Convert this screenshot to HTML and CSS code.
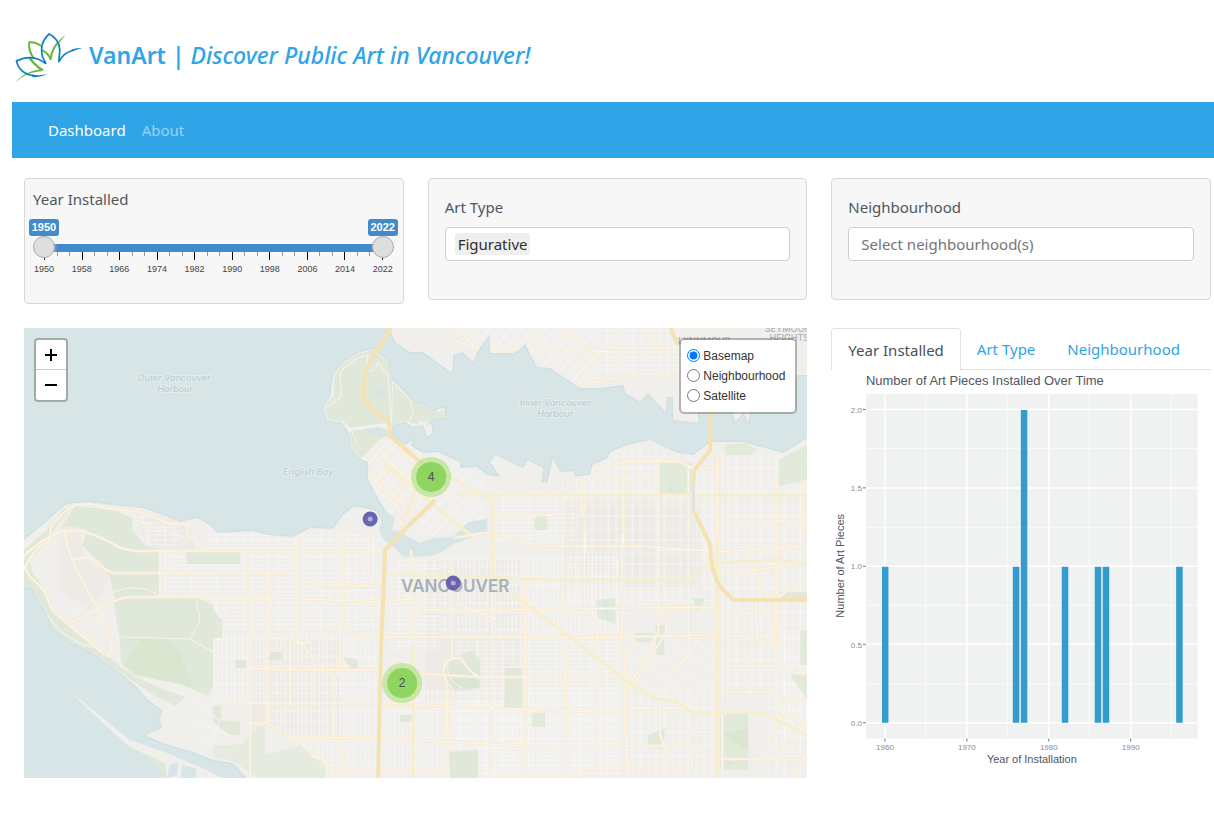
FILE: index.html
```html
<!DOCTYPE html>
<html lang="en">
<head>
<meta charset="utf-8">
<meta name="viewport" content="width=device-width, initial-scale=1">
<title>VanArt</title>
<link rel="stylesheet" href="styles.css">
</head>
<body>
<header class="masthead">
  <svg class="logo" viewBox="35 15 212 174" aria-hidden="true">
    <g fill="none" stroke-linejoin="round">
      <path stroke="#6fb43f" stroke-width="6" d="M98 111Q82 89 85 65Q105 64 119 76M122 88Q140 96 147 114Q151 86 168 66"/>
      <path fill="#6fb43f" d="M166 68Q175 56 191 42Q181 56 170 70zM46 181Q62 161 88 151Q98 146 114 144Q96 130 82 112L90 109Q104 131 128 144Q122 150 108 151Q72 156 46 181z"/>
      <path stroke="#0e82c8" stroke-width="5" d="M134 128Q97 96 48 119Q56 156 100 163M134 128Q128 116 124 108Q113 67 143 41Q172 55 174 88L171 121Q185 96 210 89"/>
      <path fill="#0e82c8" d="M92 158Q116 164 139 156Q118 168 94 166zM208 86Q222 82 240 82Q225 85 210 92z"/>
    </g>
  </svg>
  <h1 class="title">VanArt | <em>Discover Public Art in Vancouver!</em></h1>
</header>

<nav class="navbar">
  <a class="nav-link active" href="#dashboard">Dashboard</a>
  <a class="nav-link" href="#about">About</a>
</nav>

<main class="board">
  <section class="card card-years">
    <h2 class="label" id="years">Year Installed</h2>
    <div class="slider" role="group" aria-labelledby="years">
      <div class="bubbles"><output class="bubble">1950</output><output class="bubble">2022</output></div>
      <div class="track">
        <input class="range" type="range" min="1950" max="2022" value="1950" aria-label="From year">
        <input class="range" type="range" min="1950" max="2022" value="2022" aria-label="To year">
      </div>
      <div class="ticks"><i></i><i></i><i></i><i></i><i></i><i></i><i></i><i></i><i></i><i></i><i></i><i></i><i></i><i></i><i></i><i></i><i></i><i></i><i></i><i></i><i></i><i></i><i></i><i></i><i></i><i></i><i></i><i></i></div>
      <div class="years"><span>1950</span><span>1958</span><span>1966</span><span>1974</span><span>1982</span><span>1990</span><span>1998</span><span>2006</span><span>2014</span><span>2022</span></div>
    </div>
  </section>

  <section class="card">
    <label class="label" for="art-type">Art Type</label>
    <div class="field"><span class="chip">Figurative</span><input class="entry" id="art-type" type="text"></div>
  </section>

  <section class="card">
    <label class="label" for="hood">Neighbourhood</label>
    <div class="field field-empty"><input class="entry" id="hood" type="text" placeholder="Select neighbourhood(s)"></div>
  </section>

  <section class="map">
    <svg class="map-canvas" viewBox="24 328 783 450" preserveAspectRatio="xMidYMid slice" role="img" aria-label="Map of public art in Vancouver">
      <defs>
        <pattern id="blocks" width="26" height="17" patternUnits="userSpaceOnUse">
          <path class="street" d="M0 0H26M0 4H26M0 8H26M0 13H26M0 0V17M9 0V17M18 0V17"/>
        </pattern>
        <pattern id="lanes" width="21" height="27" patternUnits="userSpaceOnUse">
          <path class="street" d="M0 0V27M4 0V27M8 0V27M12 0V27M17 0V27M0 0H21M0 9H21M0 18H21"/>
        </pattern>
        <pattern id="wide" width="24" height="24" patternUnits="userSpaceOnUse">
          <path class="street" d="M0 0H24M0 12H24M0 0V24M8 0V24M16 0V24"/>
        </pattern>
        <pattern id="diag" width="16" height="8" patternUnits="userSpaceOnUse" patternTransform="rotate(42)">
          <path class="street" d="M0 0H16M0 0V8M8 0V8"/>
        </pattern>
        <pattern id="fan" width="16" height="7" patternUnits="userSpaceOnUse" patternTransform="rotate(-58)">
          <path class="street" d="M0 0H16M0 0V7"/>
        </pattern>
        <path id="land-main" d="M24 540L40 527 50 518 67 504 87 502 113 505 143 508 163 515 180 522 197 518 210 525 217 533 233 532 253 531 267 535 293 537 310 528 333 529 343 515 353 507 364 508 375 511 387 512 380 502 368 480 368 462 358 458 350 445 350 435 342 423 327 420 323 407 330 397 333 375 342 363 357 353 373 349 387 360 392 380 403 390 413 402 423 405 435 413 437 409 445 408 445 418 435 418 427 423 432 425 432 433 427 437 423 425 413 427 405 422 392 425 392 435 403 447 412 440 411 446 423 453 438 452 448 457 460 462 460 468 477 467 487 475 500 477 490 462 495 455 523 468 527 460 543 468 541 482 547 483 553 458 560 472 573 471 575 477 590 475 592 465 607 458 610 452 627 445 650 440 677 453 693 455 710 442 743 442 783 453 807 438V778H247L233 763 213 760 193 752 163 743 145 735 162 728 160 720 162 710 148 700 137 687 120 673 93 653 67 640 52 628 47 613 37 600 32 588 24 587Z"/>
        <path id="land-north" d="M389 328L395 342 410 352 423 352 452 373 453 355 463 352 473 362 478 350 489 335 490 353 513 353 519 350 525 344 532 358 537 367 550 368 562 376 580 388 600 388 623 385 625 393 640 402 648 393 665 412 667 397 673 397 673 420 698 423 697 405 730 408 735 422 743 413 748 422 752 405 790 395 797 375 807 375V328Z"/>
        <clipPath id="ashore"><use href="#land-main"/><use href="#land-north"/></clipPath>
        <g id="roads">
          <path d="M24 570Q35 545 49 542L51 528Q58 515 75 505Q92 502 104 508L140 512 170 524 187 524V535L197 541V549M24 556Q40 540 62 531H82Q105 538 120 548L135 551H383M64 531Q68 555 82 580L98 609 109 632 112 647 107 657M72 560Q85 555 98 562Q106 572 114 573H295L302 580 321 585 383 586M68 624L105 606Q120 597 130 597H245L383 602 415 598 425 610H493L717 607M24 565L30 577 43 589 52 610 68 624 105 655M160 550V596M245 550V583L250 590V778M267 572V723M297 534V640M341 534V575M341 575V623L339 670 334 679 334 737 352 778M368 534V575M247 634H285L298 643Q306 645 315 638L335 628 348 628 356 637H555L575 638 717 635M297 640L311 654 314 664V703M290 638V703M247 669L383 670 442 675 480 677H628M213 703H383L487 708 595 712H678L690 700M250 710V723H267L290 738 302 744 314 757 325 761 328 778M290 737L383 738 540 747 605 746H695L713 759H807M325 772H447M490 776H580L592 768H692V748M411 550V640M452 555V658M452 658Q438 667 447 682L448 778M452 658H461Q471 675 480 677M492 550V778M525 580V703L522 778M562 535V598L566 604V642L564 778M584 534V605L597 630 596 778M622 534V623L621 640 615 654M625 650V725L628 778M658 455V605L666 620V632L630 690M658 520V632L627 690M688 465V655L665 680M717 455V778M660 690V735L666 750V778M658 550H717M460 605L497 620M575 476H590L623 461H658L680 462 692 468M688 468H718M623 461V545M597 479H658M562 480V534M581 480V510L585 520V553M497 515H556M454 538L490 532 540 546H640L717 552 807 546"/>
          <path d="M722 455V778M777 478V618L779 720M803 480V535M722 521H807M725 575L800 563M722 613H780M722 639H757L773 644 775 600 805 578M745 550L763 590 775 597M757 639L755 600M722 666H780L795 673H807M722 692H775M750 612V710M777 700H807M777 710L807 725M762 755L785 710M770 761L800 725M795 778L807 750M690 735H717"/>
          <path d="M457 328L479 352 500 362 557 403 590 383 640 374 665 375 682 382M452 340L490 352H682M620 328V376M560 328L592 350 620 352M645 328L660 350M600 350L575 390M532 328V352"/>
          <path d="M375 463L394 446M372 470L415 518M381 455L432 500M400 450L450 497M372 485L395 463M390 500L422 462M407 512L445 468M375 480L405 519"/>
        </g>
      </defs>
      <rect class="water" x="24" y="328" width="783" height="450"/>
      <g class="shore"><use href="#land-main"/><use href="#land-north"/></g>
      <g class="land">
        <use href="#land-main"/><use href="#land-north"/>
        <path d="M70 691L93 710 130 740 167 753 207 770 222 778H162L160 767 143 753 130 747 107 727 87 708Z"/>
      </g>
      <g fill="#ece7e2">
        <path d="M137 520L160 515 190 527 195 549H148zM60 510L78 520 85 560 112 575 90 610 60 590zM250 640H340V735H290L250 720z" opacity=".55"/>
        <path d="M425 560H520V700H425zM560 500H700V590H560z" opacity=".4"/>
      </g>
      <g clip-path="url(#ashore)">
        <path fill="url(#blocks)" d="M232 533H293L333 531 380 537V632H213V600H160V550H205L210 533zM455 640H620V775H455zM495 490H575V540H495zM390 560H440V650H390z"/>
        <path fill="url(#lanes)" d="M213 632H380V702H213zM267 702H383V775H330L267 723zM385 690H615V775H385zM440 555H620V638H440zM780 630H807V740H780z"/>
        <path fill="url(#wide)" d="M575 480L627 447 665 452 690 470H715V605H565zM725 445L780 455 807 470V775H765V690H725zM630 690H715V775H630z"/>
        <path fill="url(#diag)" d="M352 458L390 437 411 448 455 462 485 478V520L430 537 390 520 370 480zM455 328L560 403 600 380V328z"/>
        <path fill="url(#fan)" d="M623 635H715V710L690 712 640 688 625 670z"/>
        <path fill="url(#blocks)" d="M600 328H680V374H600zM140 520L180 526V546H148z"/>
      </g>
      <g class="park">
        <path d="M75 506L113 510 133 518 132 530 145 545 160 550V600L115 598 109 575 97 560 82 545 88 530 75 527 62 527z"/>
        <path d="M113 600Q120 597 140 597H195L213 605V685L208 696 180 684 133 675 121 663 120 640z"/>
        <path d="M24 550L48 529 62 510 75 505 60 520 47 542 30 560 32 572 44 588 53 611 69 625 110 658 133 676 165 690 185 697 176 706 155 696 128 678 95 654 67 640 52 628 47 613 37 600 32 588 24 587z"/>
        <path d="M342 364L357 354 373 350 388 362 392 382 391 422 350 428 342 422 327 419 324 407 334 395 334 376z"/>
        <path d="M393 381L409 397 418 402V424L405 421 392 425zM412 401L423 406 434 413 445 410V417L424 422 410 416z"/>
        <path d="M350 431L370 429 385 436 377 442 360 460 351 445zM186 550H240V564H187zM205 602V638H222V620zM659 463H692V495H659zM779 460L807 445V480L779 486zM447 660L472 650 480 660V688L455 691 443 675zM505 668H522V710H504zM532 713H545V727H532zM720 713H748V770H720zM448 752L478 750V778H448zM596 600L615 598V624L597 617zM725 445L745 443 757 450 750 455H725zM648 735L665 728 662 750 648 745zM655 625H664V655H656zM800 630H807V665H800zM780 592H807V600H780zM790 675H807V700zM634 633H655L650 642H635zM533 519L547 512V530H535zM343 657L357 660 358 668H350zM235 660H246V668H235zM271 652H282V660H268zM400 715H414V722H400zM213 706H221V720L240 722V735H230L213 722zM692 598H705L697 612z"/>
        <path d="M162 745L213 757V746L242 744 258 726H265V755L300 745 325 765V778H258L235 762z" opacity=".6"/>
        <path d="M143 753L165 763 167 778H162L158 768z"/>
      </g>
      <g class="deep">
        <path d="M123 665L140 640 165 636 180 652 192 687 140 675zM452 680L478 678V688H456zM748 728L748 750 722 735z"/>
      </g>
      <g class="path" clip-path="url(#ashore)">
        <path d="M328 420L323 410 336 401 341 396 340 372 357 358 368 355 366 366M342 421Q355 432 356 443M377 362L388 375 391 422M392 381L409 399M410 400L413 412 408 424M350 429L391 424M366 366Q372 378 378 362M120 637L190 639 200 620 196 600M190 639L213 652M45 610Q60 640 95 648M110 593Q140 582 158 595M135 520L190 540M142 515L150 549M80 575L92 600 73 615M96 628L105 612"/>
        <path d="M345 630Q360 600 383 613M345 645Q360 655 380 635M355 600L370 630M270 605L297 640M192 697Q210 715 220 720L208 745 190 720 230 735M448 663Q445 680 463 688M460 660L478 680"/>
      </g>
      <g class="water">
        <path d="M375 509L387 512 395 518 392 530 400 532 410 538 420 543 433 538 453 537 468 522 487 519 487 532 470 538 452 545 440 553 430 556 404 557 393 547 384 540 379 530 381 522z"/>
        <path d="M363 429L378 427 392 431 391 437 377 436zM376 391L382 388 387 393 384 398 377 396zM603 601L608 603V613L603 612zM170 765L178 762 177 775 167 778zM182 765L197 769 195 778H181zM726 761L734 763 730 766zM459 761H466V763H459zM669 486L673 482V492H669z"/>
      </g>
      <g clip-path="url(#ashore)">
        <use href="#roads" class="road-case"/>
        <use href="#roads" class="road-core"/>
      </g>
      <g class="artery">
        <path d="M487 495H807M384 574L490 577 550 580H690L705 566 717 563 780 560 807 565M493 500V577L500 586 530 607 590 653 625 680 652 697 675 702 695 714 745 712 765 714 807 735M717 540V778M413 645V778M440 472L492 500M385 705H413"/>
        <path d="M424 470L400 530M385 465L470 535M455 495H490"/>
      </g>
      <g class="highway">
        <path d="M391 328Q381 345 371 360Q357 388 368 404Q374 413 385 418Q392 424 388 434L420 462 440 487M435 500L411 523 385 550 383 600 381 640 378 778M710 412V450L694 470 693 484M694 512L710 545Q711 575 721 588L733 600H807M670 328L678 345"/>
      </g>
      <path d="M693 484V512" stroke="#e4e2dc" stroke-width="3"/>
      <g class="water-label">
        <text x="174" y="381">Outer Vancouver</text><text x="175" y="392">Harbour</text>
        <text x="555" y="406">Inner Vancouver</text><text x="555" y="417">Harbour</text>
        <text x="308" y="475">English Bay</text>
      </g>
      <g class="town-label">
        <text x="787" y="332">SEYMOUR</text><text x="789" y="341">HEIGHTS</text><text x="704" y="344">LYNNMOUR</text>
      </g>
      <text class="city-label" x="455" y="592">VANCOUVER</text>
      <g class="pin"><circle cx="370" cy="519" r="5"/><circle cx="453" cy="583" r="5"/></g>
      <g class="cluster">
        <circle class="halo" cx="431" cy="477" r="20"/><circle class="disc" cx="431" cy="477" r="15"/><text x="431" y="481">4</text>
        <circle class="halo" cx="402" cy="683" r="20"/><circle class="disc" cx="402" cy="683" r="15"/><text x="402" y="687">2</text>
      </g>
    </svg>
    <div class="zoom">
      <button type="button" aria-label="Zoom in"><svg viewBox="0 0 12 12"><path d="M0 6H12M6 0V12"/></svg></button>
      <button type="button" aria-label="Zoom out"><svg viewBox="0 0 12 12"><path d="M0 6H12"/></svg></button>
    </div>
    <fieldset class="layers">
      <label><input type="radio" name="layer" checked>Basemap</label>
      <label><input type="radio" name="layer">Neighbourhood</label>
      <label><input type="radio" name="layer">Satellite</label>
    </fieldset>
  </section>

  <section class="charts">
    <div class="tabs" role="tablist">
      <button class="tab selected" type="button" role="tab" aria-selected="true">Year Installed</button>
      <button class="tab" type="button" role="tab" aria-selected="false">Art Type</button>
      <button class="tab" type="button" role="tab" aria-selected="false">Neighbourhood</button>
    </div>
    <svg class="chart" viewBox="831 370 380 400" role="img" aria-label="Number of Art Pieces Installed Over Time">
      <text class="chart-title" x="866" y="385">Number of Art Pieces Installed Over Time</text>
      <rect x="866" y="394" width="332" height="345" fill="#f0f2f2"/>
      <path stroke="#fff" stroke-width="1" opacity=".7" d="M866 448.500H1198M866 527.500H1198M866 605.500H1198M866 684.500H1198M926 394V739M1007.500 394V739M1089.500 394V739M1171.500 394V739"/>
      <path stroke="#fff" stroke-width="1.500" d="M866 409.500H1198M866 488H1198M866 566.500H1198M866 644.500H1198M866 723H1198M885 394V739M967 394V739M1049 394V739M1131 394V739"/>
      <path stroke="#777" d="M863 409.500H866M863 488H866M863 566.500H866M863 644.500H866M863 723H866M885 739V742M967 739V742M1049 739V742M1131 739V742"/>
      <path fill="#349bce" d="M882 567h6.500v156h-6.500zM1013 567h6.500v156h-6.500zM1021 410h6.500v313h-6.500zM1062 567h6.500v156h-6.500zM1095 567h6.500v156h-6.500zM1103 567h6.500v156h-6.500zM1176.500 567h6.500v156h-6.500z"/>
      <g class="tick-y"><text x="862" y="413">2.0</text><text x="862" y="491">1.5</text><text x="862" y="569">1.0</text><text x="862" y="648">0.5</text><text x="862" y="726">0.0</text></g>
      <g class="tick-x"><text x="885" y="750">1960</text><text x="967" y="750">1970</text><text x="1049" y="750">1980</text><text x="1131" y="750">1990</text></g>
      <text class="axis" x="1032" y="763">Year of Installation</text>
      <text class="axis" transform="translate(844 566) rotate(-90)">Number of Art Pieces</text>
    </svg>
  </section>
</main>
</body>
</html>
```

FILE: styles.css
```css
* { box-sizing: border-box; }
body {
  margin: 0;
  padding-left: 12px;
  background: #fff;
  color: #4f565e;
  font: 15px/24px "Noto Sans", "Open Sans", sans-serif;
}

.masthead { display: flex; align-items: center; gap: 4px; height: 102px; padding: 16px 0 8px; }
.logo { width: 73px; height: 60px; flex: none; }
.title { margin: 0; color: #2fa4e7; font: 600 23px/32px "Noto Sans", "Open Sans", sans-serif; }
.title em { font-weight: 500; }

.navbar { display: flex; align-items: center; gap: 16px; height: 56px; padding: 0 36px; background: #2fa4e7; }
.nav-link { color: rgba(255, 255, 255, .5); text-decoration: none; }
.nav-link.active { color: #fff; }

.board {
  display: grid;
  grid-template-columns: repeat(3, minmax(0, 1fr));
  gap: 24px;
  align-items: start;
  padding: 20px 3px 24px 12px;
}

.card { min-height: 122px; padding: 16px; border: 1px solid #d8d8d8; border-radius: 4px; background: #f7f7f7; }
.label { display: block; margin: 0 0 8px; font-size: 15px; font-weight: 400; line-height: 24px; }
.field { display: flex; align-items: center; height: 34px; padding: 0 9px; border: 1px solid #ccc; border-radius: 4px; background: #fff; }
.field-empty { padding: 0 12px; }
.chip { padding: 0 3px; border-radius: 3px; background: #efefef; color: #303030; line-height: 22px; }
.entry { flex: 1; min-width: 0; padding: 0; border: 0; outline: 0; background: none; color: #303030; font: inherit; }
.entry::placeholder { color: #757575; opacity: 1; }

.card-years { min-height: 126px; padding: 8px 9px 8px 8px; }
.card-years .label { margin: 0; }
.slider { position: relative; font-family: "Liberation Sans", Arial, sans-serif; }
.bubbles { display: flex; justify-content: space-between; margin: 8px -4px 0; }
.bubble { width: 30px; border-radius: 3px; background: #428bca; color: #fff; font-size: 11px; font-weight: 700; line-height: 17px; text-align: center; }
.track { position: relative; height: 8px; margin: 8px 11px 0; background: #428bca; }
.range { position: absolute; left: -11px; top: -8px; width: calc(100% + 22px); height: 22px; margin: 0; background: none; appearance: none; pointer-events: none; }
.range::-webkit-slider-thumb { width: 22px; height: 22px; border: 1px solid #ababab; border-radius: 50%; background: #dedede; box-shadow: 1px 1px 3px rgba(255, 255, 255, .3); appearance: none; pointer-events: auto; }
.ticks { display: flex; justify-content: space-between; height: 8px; margin: 0 11px; }
.ticks i { width: 1px; height: 4px; background: #999; }
.ticks i:nth-child(3n+1) { height: 8px; background: #000; }
.years { display: flex; justify-content: space-between; margin: 2px 1px 0; color: #444; font-size: 9px; line-height: 14px; }

.map { position: relative; grid-column: span 2; height: 450px; overflow: hidden; }
.map-canvas { display: block; width: 100%; height: 100%; }
.water { fill: #d7e5e6; }
.shore { fill: none; stroke: #d0e0e3; stroke-width: 3; }
.land { fill: #f0efec; }
.park { fill: #dee7d6; opacity: .85; }
.deep { fill: #d5e4ca; opacity: .6; }
.street { fill: none; stroke: #f7f6f4; stroke-width: 1; }
.path { fill: none; stroke: #f4f4f0; stroke-width: 1; }
.road-case { fill: none; stroke: #f8ebd2; stroke-width: 3; stroke-linejoin: round; }
.road-core { fill: none; stroke: #faf8f3; stroke-width: 1; stroke-linejoin: round; }
.artery { fill: none; stroke: #f6efcf; stroke-width: 3; stroke-linejoin: round; }
.highway { fill: none; stroke: #f5e2b3; stroke-width: 4; stroke-linejoin: round; }
.water-label { fill: #b9ced3; stroke: #e4edee; stroke-width: 2; paint-order: stroke; font: italic 500 9px Inter, sans-serif; text-anchor: middle; }
.town-label { fill: #aeb1b9; font: 500 9px Inter, sans-serif; text-anchor: middle; }
.city-label { fill: #a9afb9; font: 600 17px Inter, sans-serif; text-anchor: middle; }
.pin { fill: #aaaad0; stroke: #5c55ac; stroke-width: 5; opacity: .9; }
.cluster { fill: #4a5157; font: 12px "Liberation Sans", Arial, sans-serif; text-anchor: middle; }
.halo { fill: #b5e28c; fill-opacity: .7; }
.disc { fill: #7fd04d; fill-opacity: .8; }

.zoom { position: absolute; left: 10px; top: 10px; width: 34px; border: 2px solid rgba(0, 0, 0, .25); border-radius: 4px; background: #fff; background-clip: padding-box; }
.zoom button { display: grid; place-items: center; width: 30px; height: 30px; padding: 0; border: 0; background: none; }
.zoom button:first-child { border-bottom: 1px solid #ccc; }
.zoom svg { width: 12px; height: 12px; stroke: #000; stroke-width: 2; }

.layers { position: absolute; top: 10px; right: 10px; width: 118px; min-width: 0; margin: 0; padding: 6px; border: 2px solid rgba(0, 0, 0, .25); border-radius: 5px; background: #fff; background-clip: padding-box; color: #333; font: 12px/20px "Liberation Sans", Arial, sans-serif; }
.layers label { display: flex; align-items: center; gap: 3px; white-space: nowrap; }
.layers input { width: 13px; height: 13px; margin: 0 0 2px; }

.tabs { display: flex; border-bottom: 1px solid #dee2e6; }
.tab { height: 41px; padding: 0 16px; border: 0; background: none; color: #2fa4e7; font: inherit; white-space: nowrap; }
.tab.selected { height: 42px; margin-bottom: -1px; border: 1px solid #dee2e6; border-bottom: 0; border-radius: 4px 4px 0 0; background: #fff; color: #495057; }
.chart { display: block; width: 100%; height: auto; }
.chart text { fill: #4f565e; font-family: "Liberation Sans", Arial, sans-serif; }
.chart-title { font-size: 13px; }
.axis { font-size: 11px; text-anchor: middle; }
.chart .tick-y text, .chart .tick-x text { fill: #868c91; font-size: 8px; text-anchor: end; }
.chart .tick-x text { text-anchor: middle; }
```
